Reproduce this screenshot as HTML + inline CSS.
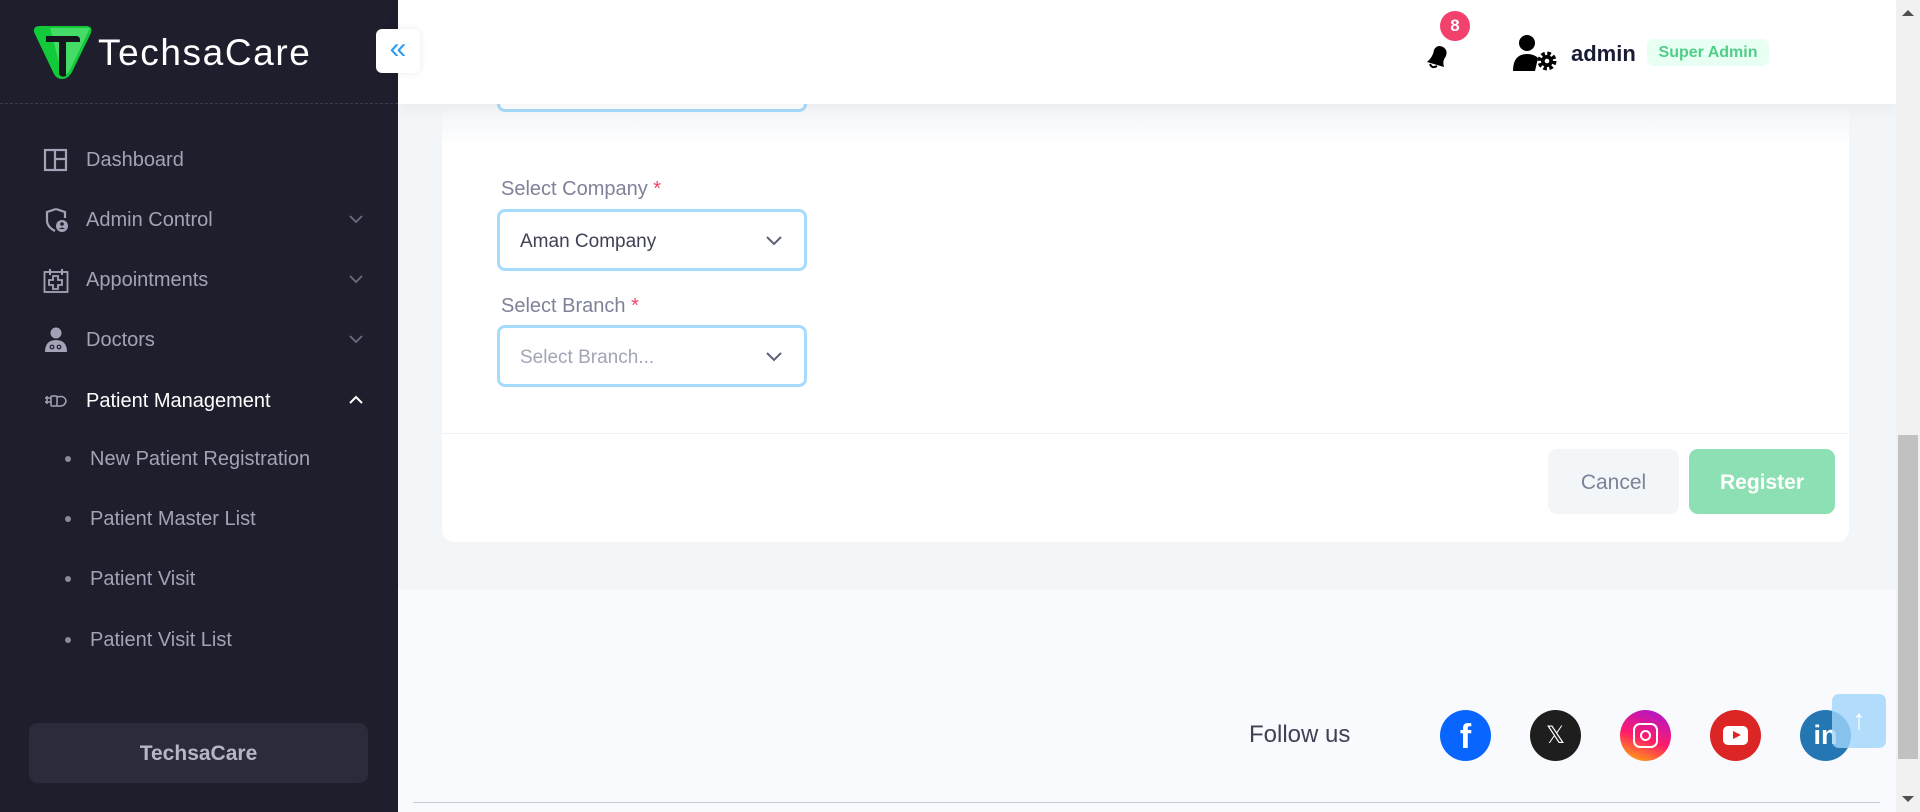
<!DOCTYPE html>
<html><head><meta charset="utf-8">
<style>
*{box-sizing:border-box;margin:0;padding:0}
body{width:1920px;height:812px;overflow:hidden;font-family:"Liberation Sans",sans-serif;background:#f9fafd;position:relative}
.abs{position:absolute}
#side{left:0;top:0;width:398px;height:812px;background:#1e1e2d}
.mi{position:absolute;left:0;width:398px;color:#a2a3b7;font-size:20px;line-height:24px}
.mi .ic{position:absolute;left:43px;top:-12px;width:26px;height:26px}
.mi .t{position:absolute;left:86px;top:-11px;white-space:nowrap}
.mi .ch{position:absolute;left:349px;top:-4px}
.sub{position:absolute;left:0;color:#a2a3b7;font-size:20px}
.sub .b{position:absolute;left:65px;top:-2px;width:6px;height:6px;border-radius:50%;background:#8a8b9a}
.sub .t{position:absolute;left:90px;top:-11px;line-height:24px;white-space:nowrap}
.inp{position:absolute;left:497px;width:310px;height:62px;border:3px solid #a6dcfb;border-radius:8px;background:#fff;font-size:19px;color:#3f4254}
.lbl{position:absolute;left:501px;font-size:20px;color:#7e8299}
.lbl b{color:#f1416c;font-weight:normal}
.soc{position:absolute;top:710px;width:51px;height:51px;border-radius:50%;}
</style></head><body>
<div id="side" class="abs">
  <svg class="abs" style="left:32px;top:24px" width="62" height="56" viewBox="0 0 62 56">
    <path d="M2 8 Q1 2 8 2 L54 2 Q61 2 59 9 L40 48 Q36 55 30 55 Q24 55 21 48 Z" fill="#12c93a"/>
    <path d="M18 4 L58 4 L38 46 Q34 52 30 50 Z" fill="#5be27a" opacity=".7"/>
    <path d="M14 12 L44 12 Q48 12 48 16 L48 18 L34 18 L34 52 Q29 54 27 50 L27 18 L14 18 Z" fill="#16161e"/>
  </svg>
  <div class="abs" style="left:98px;top:32px;font-size:37px;color:#fff;letter-spacing:1.6px">TechsaCare</div>
  <div class="abs" style="left:0;top:103px;width:398px;border-top:1px dashed #3b3b4d"></div>

  <div class="mi" style="top:159px"><svg class="ic" viewBox="0 0 26 26"><rect x="2" y="3" width="21" height="20" fill="none" stroke="#a2a3b7" stroke-width="2.2"/><path d="M12 3v20M12 12h11" stroke="#a2a3b7" stroke-width="2.2"/></svg><span class="t">Dashboard</span></div>
  <div class="mi" style="top:219px"><svg class="ic" viewBox="0 0 26 26"><path d="M13 2 L4 5 V13 Q4 20 12 24" fill="none" stroke="#a2a3b7" stroke-width="2.2"/><path d="M13 2 L22 5 V11" fill="none" stroke="#a2a3b7" stroke-width="2.2"/><circle cx="19" cy="19" r="6" fill="#a2a3b7"/><circle cx="19" cy="17" r="1.8" fill="#1e1e2d"/><path d="M16 22 Q19 19 22 22" fill="#1e1e2d"/></svg><span class="t">Admin Control</span><svg class="ch" width="14" height="9" viewBox="0 0 14 9"><path d="M1 1l6 6 6-6" stroke="#6c6d80" stroke-width="1.8" fill="none"/></svg></div>
  <div class="mi" style="top:279px"><svg class="ic" viewBox="0 0 26 26"><rect x="1.5" y="5" width="23" height="20" fill="none" stroke="#a2a3b7" stroke-width="1.8"/><path d="M7 2v6M19 2v6" stroke="#a2a3b7" stroke-width="2"/><path d="M10 9h5v4h4v5h-4v4h-5v-4H6v-5h4z" fill="none" stroke="#a2a3b7" stroke-width="1.8"/></svg><span class="t">Appointments</span><svg class="ch" width="14" height="9" viewBox="0 0 14 9"><path d="M1 1l6 6 6-6" stroke="#6c6d80" stroke-width="1.8" fill="none"/></svg></div>
  <div class="mi" style="top:339px"><svg class="ic" viewBox="0 0 26 26"><circle cx="13" cy="6" r="5.5" fill="#a2a3b7"/><path d="M2 25 Q2 13 13 13 Q24 13 24 25Z" fill="#a2a3b7"/><circle cx="9" cy="20" r="1.8" fill="none" stroke="#1e1e2d" stroke-width="1.2"/><circle cx="16" cy="20" r="1.8" fill="none" stroke="#1e1e2d" stroke-width="1.2"/></svg><span class="t">Doctors</span><svg class="ch" width="14" height="9" viewBox="0 0 14 9"><path d="M1 1l6 6 6-6" stroke="#6c6d80" stroke-width="1.8" fill="none"/></svg></div>
  <div class="mi" style="top:400px;color:#fff"><svg class="ic" viewBox="0 0 26 26"><path d="M2 10h6M2 14h6M4 8v8" stroke="#a2a3b7" stroke-width="1.5"/><rect x="8" y="8" width="6" height="10" rx="1" fill="none" stroke="#a2a3b7" stroke-width="1.5"/><path d="M14 9 Q22 7 23 13 Q22 19 14 18" fill="none" stroke="#a2a3b7" stroke-width="1.5"/></svg><span class="t">Patient Management</span><svg class="ch" style="top:-5px" width="14" height="9" viewBox="0 0 14 9"><path d="M1 8l6-6 6 6" stroke="#fff" stroke-width="2" fill="none"/></svg></div>

  <div class="sub" style="top:458px"><span class="b"></span><span class="t">New Patient Registration</span></div>
  <div class="sub" style="top:518px"><span class="b"></span><span class="t">Patient Master List</span></div>
  <div class="sub" style="top:578px"><span class="b"></span><span class="t">Patient Visit</span></div>
  <div class="sub" style="top:639px"><span class="b"></span><span class="t">Patient Visit List</span></div>

  <div class="abs" style="left:29px;top:723px;width:339px;height:60px;background:#2a2b3b;border-radius:9px;color:#b5b6c6;font-size:21px;font-weight:bold;text-align:center;line-height:62px">TechsaCare</div>
</div>

<div class="abs" style="left:398px;top:104px;width:1498px;height:485px;background:#f3f6f9"></div>
<div class="abs" style="left:442px;top:90px;width:1407px;height:452px;background:#fff;border-radius:0 0 12px 12px"></div>
<div class="abs" style="left:442px;top:104px;width:1407px;height:45px;background:linear-gradient(#f3f5f8,#fff)"></div>
<div class="inp" style="top:50px"></div>
<div class="abs" style="left:398px;top:0;width:1498px;height:104px;background:#fff;box-shadow:0 6px 14px rgba(0,0,0,.04)"></div>
<div class="abs" style="left:376px;top:29px;width:44px;height:44px;background:#fff;border-radius:6px;box-shadow:0 0 8px rgba(0,0,0,.08);color:#2f9df5;font-size:30px;text-align:center;line-height:40px">«</div>

<svg class="abs" style="left:1424px;top:42px" width="28" height="28" viewBox="0 0 28 28"><path d="M3 20 L20 25 Q18 19 22 14 Q24 8 19 5 Q13 2 10 8 Q9 15 3 20Z" fill="#000"/><path d="M6 22 Q8 27 13 24" stroke="#000" stroke-width="2" fill="none"/></svg>
<div class="abs" style="left:1440px;top:11px;width:30px;height:30px;border-radius:50%;background:#f1416c;color:#fff;font-weight:bold;font-size:17px;text-align:center;line-height:30px">8</div>
<svg class="abs" style="left:1513px;top:34px" width="48" height="38" viewBox="0 0 48 38"><circle cx="14" cy="9" r="8" fill="#000"/><path d="M0 37 Q0 20 14 20 Q21 20 25 24 L22 37Z" fill="#000"/><circle cx="34" cy="27" r="7.5" fill="none" stroke="#000" stroke-width="4" stroke-dasharray="3.5 2.4"/><circle cx="34" cy="27" r="6" fill="#000"/><circle cx="34" cy="27" r="2.3" fill="#fff"/></svg>
<div class="abs" style="left:1571px;top:41px;font-size:22px;font-weight:bold;color:#181c32">admin</div>
<div class="abs" style="left:1647px;top:39px;width:122px;height:27px;border-radius:7px;background:#e8fff3;color:#50cd89;font-weight:bold;font-size:16px;text-align:center;line-height:28px">Super Admin</div>

<div class="lbl" style="top:178px">Select Company <b>*</b></div>
<div class="inp" style="top:209px"><span class="abs" style="left:20px;top:19px">Aman Company</span><svg class="abs" style="left:266px;top:24px" width="16" height="10" viewBox="0 0 16 10"><path d="M1 1l7 7 7-7" stroke="#5e6278" stroke-width="2" fill="none"/></svg></div>
<div class="lbl" style="top:295px">Select Branch <b>*</b></div>
<div class="inp" style="top:325px;color:#a1a5b7"><span class="abs" style="left:20px;top:19px">Select Branch...</span><svg class="abs" style="left:266px;top:24px" width="16" height="10" viewBox="0 0 16 10"><path d="M1 1l7 7 7-7" stroke="#5e6278" stroke-width="2" fill="none"/></svg></div>
<div class="abs" style="left:442px;top:433px;width:1407px;border-top:1px solid #eff2f5"></div>
<div class="abs" style="left:1548px;top:449px;width:131px;height:65px;border-radius:9px;background:#f3f6f9;color:#7e8299;font-size:21px;text-align:center;line-height:67px">Cancel</div>
<div class="abs" style="left:1689px;top:449px;width:146px;height:65px;border-radius:9px;background:#8de0b3;color:#fff;font-weight:bold;font-size:21px;text-align:center;line-height:67px">Register</div>

<div class="abs" style="left:1249px;top:721px;font-size:24px;color:#3f4254">Follow us</div>
<div class="soc" style="left:1440px;background:#0866ff;color:#fff;font-weight:bold;font-size:34px;text-align:center;line-height:54px">f</div>
<div class="soc" style="left:1530px;background:#1e1e1e;color:#fff;font-size:24px;text-align:center;line-height:51px">𝕏</div>
<div class="soc" style="left:1620px;background:linear-gradient(200deg,#a515d8,#ff1b6a 55%,#ffb800)"><div class="abs" style="left:13px;top:13px;width:25px;height:25px;border:2.5px solid #fff;border-radius:7px"></div><div class="abs" style="left:20px;top:20px;width:11px;height:11px;border:2.5px solid #fff;border-radius:50%"></div></div>
<div class="soc" style="left:1710px;background:#dc2626"><div class="abs" style="left:13px;top:16px;width:25px;height:19px;background:#fff;border-radius:5px"></div><div class="abs" style="left:23px;top:21px;border-left:8px solid #dc2626;border-top:4.5px solid transparent;border-bottom:4.5px solid transparent"></div></div>
<div class="soc" style="left:1800px;background:#2477b3;color:#fff;font-weight:bold;font-size:27px;text-align:center;line-height:51px">in</div>
<div class="abs" style="left:1832px;top:694px;width:54px;height:54px;border-radius:7px;background:rgba(160,212,250,.8);color:#fff;font-size:28px;text-align:center;line-height:52px">↑</div>
<div class="abs" style="left:413px;top:802px;width:1467px;border-top:1px solid #c8cbd2"></div>

<div class="abs" style="left:1896px;top:0;width:24px;height:812px;background:#f1f1f1"></div>
<div class="abs" style="left:1898px;top:435px;width:20px;height:324px;background:#c1c1c1"></div>
<div class="abs" style="left:1902px;top:10px;border-bottom:6px solid #505050;border-left:6px solid transparent;border-right:6px solid transparent"></div>
<div class="abs" style="left:1902px;top:796px;border-top:6px solid #505050;border-left:6px solid transparent;border-right:6px solid transparent"></div>
</body></html>
